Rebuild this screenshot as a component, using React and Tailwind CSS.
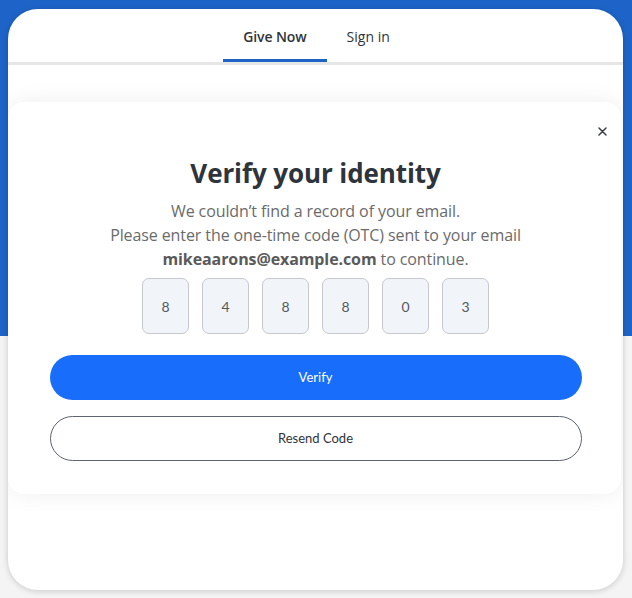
import React from "react";

export default function App() {
  const digits = ["8", "4", "8", "8", "0", "3"];
  return (
    <div className="w-[632px] h-[598px] overflow-hidden bg-[linear-gradient(to_bottom,#1e64c8_0px,#1e64c8_336px,#f4f4f4_336px,#f4f4f4_100%)] pt-[9px] pl-[8px] font-['Open_Sans',sans-serif]">
      <div className="w-[615px] h-[581px] bg-white rounded-[30px] shadow-[0_1px_6px_rgba(0,0,0,0.18)] flex flex-col overflow-hidden">
        {/* Header tabs */}
        <div className="h-[56px] flex justify-center items-stretch border-b-[3px] border-[#e6e6e6] shrink-0">
          <div className="flex items-stretch ml-[2px]">
            <div className="relative px-[20px] pt-[1px] flex items-center text-[14px] font-semibold text-[#2f343b] tracking-[-0.1px]">
              Give Now
              <div className="absolute left-0 right-0 bottom-0 h-[3px] bg-[#1f63c6]" />
            </div>
            <div className="px-[20px] pt-[1px] flex items-center text-[14px] text-[#2f343b]">
              Sign in
            </div>
          </div>
        </div>
        {/* Modal area */}
        <div className="pt-[37px] pr-[2px]">
          <div className="relative bg-white rounded-[16px] shadow-[0_0_22px_rgba(0,0,0,0.07)] pt-[54px] pb-[33px] flex flex-col items-center">
            <button className="absolute top-[23px] right-[13px] w-[12px] h-[12px] flex items-center justify-center text-[#3a3f46]">
              <svg width="9" height="9" viewBox="0 0 9 9" fill="none" stroke="currentColor" strokeWidth="1.5" strokeLinecap="round">
                <path d="M1 1L8 8M8 1L1 8" />
              </svg>
            </button>
            <h1 className="text-[26px] leading-[34px] font-bold text-[#2e343b] tracking-[-0.1px] ml-[2px]">
              Verify your identity
            </h1>
            <p className="mt-[9px] text-[16px] leading-[24px] text-[#6b6b6b] text-center tracking-[-0.1px] ml-[2px]">
              We couldn’t find a record of your email.
              <br />
              Please enter the one-time code (OTC) sent to your email
              <br />
              <span className="font-bold text-[#5a5a5a]">mikeaarons@example.com</span> to continue.
            </p>
            <div className="mt-[7px] flex gap-[13px] ml-[2px]">
              {digits.map((d, i) => (
                <div
                  key={i}
                  className="w-[47px] h-[56px] rounded-[7px] border border-[#c6c8cc] bg-[#f1f4f8] flex items-center justify-center text-[14px] text-[#555a60] font-['Lato',sans-serif]"
                >
                  {d}
                </div>
              ))}
            </div>
            <button className="mt-[21px] w-[532px] h-[45px] rounded-full bg-[#186dfb] text-white text-[13px] font-['Lato',sans-serif] flex items-center justify-center ml-[2px]">
              Verify
            </button>
            <button className="mt-[16px] w-[532px] h-[45px] rounded-full border border-[#5e6470] bg-white text-[#2f343b] text-[13px] font-['Lato',sans-serif] flex items-center justify-center ml-[2px]">
              Resend Code
            </button>
          </div>
        </div>
      </div>
    </div>
  );
}
